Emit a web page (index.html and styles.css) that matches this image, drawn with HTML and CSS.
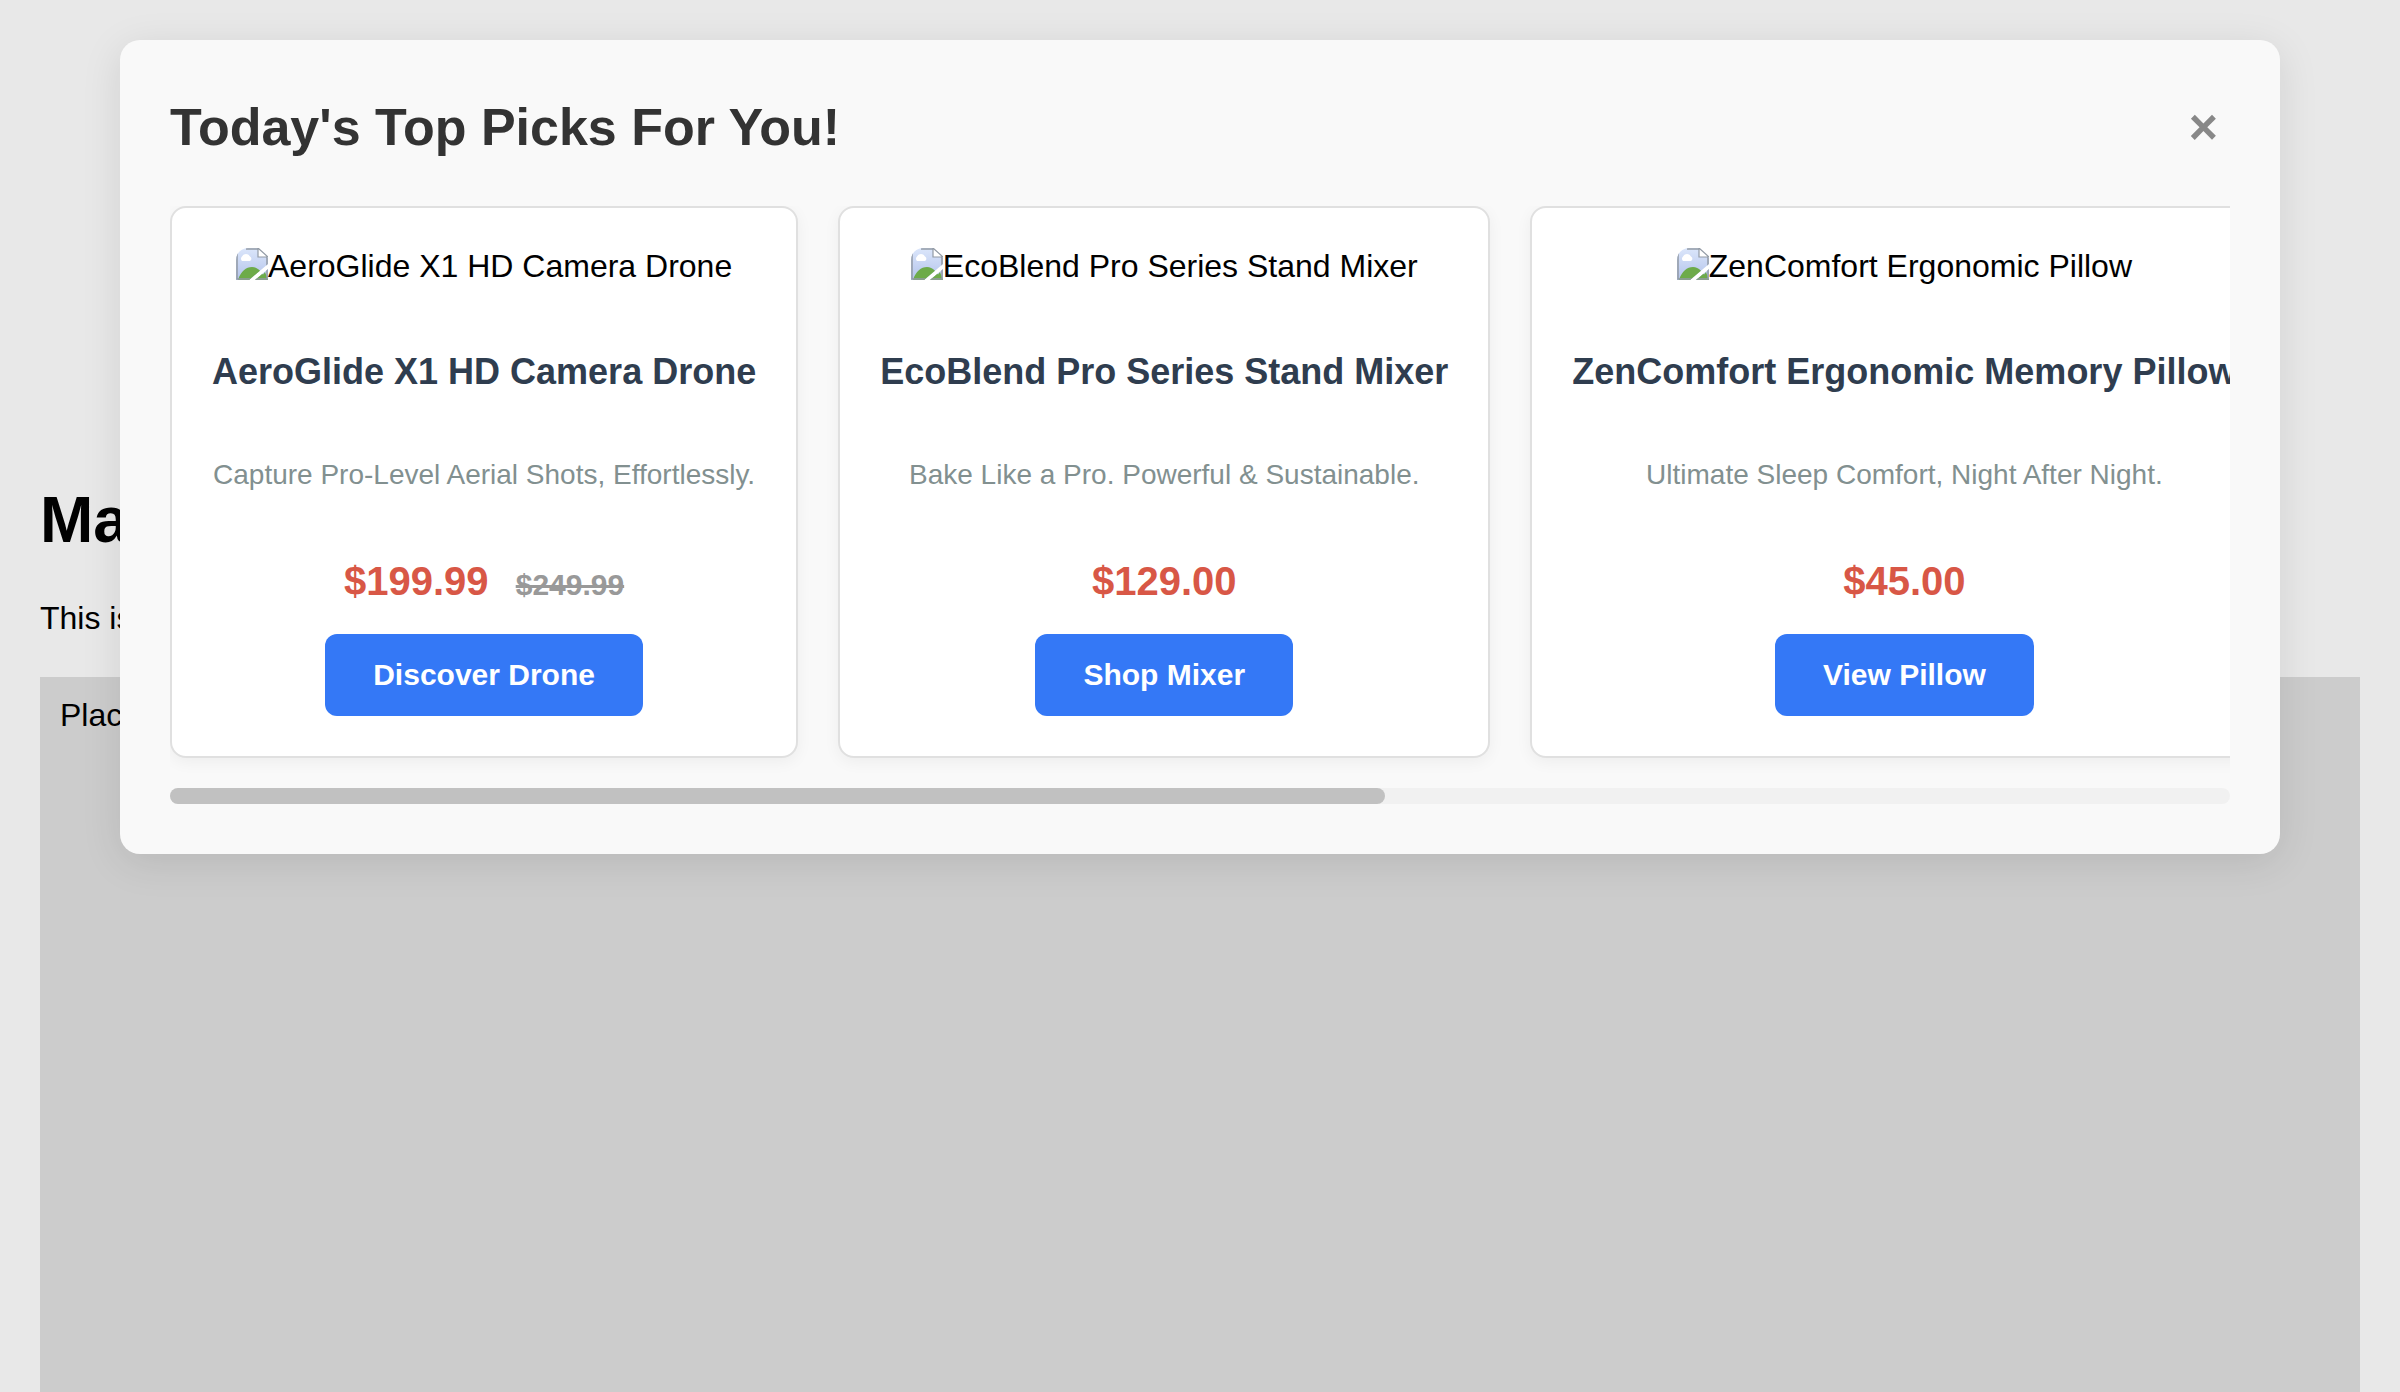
FILE: index.html
```html
<!DOCTYPE html>
<html lang="en">
<head>
<meta charset="utf-8">
<meta name="viewport" content="width=device-width, initial-scale=1">
<title>Today's Top Picks For You!</title>
<link rel="stylesheet" href="styles.css">
</head>
<body>
<svg class="sprite" width="0" height="0" aria-hidden="true">
  <defs>
    <linearGradient id="sky" x1="0" y1="0" x2="0" y2="1">
      <stop offset="0" stop-color="#dbe6fb"/>
      <stop offset="1" stop-color="#b3c3ea"/>
    </linearGradient>
    <clipPath id="sheet"><path d="M0 12A12 12 0 0 1 12 0H22L32 10V16L13 32H0Z M32 21V32H19Z"/></clipPath>
    <symbol id="picture" viewBox="0 0 32 32">
      <g clip-path="url(#sheet)">
        <path d="M0 0H32V32H0Z" fill="url(#sky)"/>
        <path d="M6 13A3 3 0 0 1 6 8.500A4.500 4.500 0 0 1 14 8.500A2.500 2.500 0 0 1 14 13Z" fill="#fff"/>
        <path d="M2 32C5 23 10 19 16 19C22 19 26 24 30 32Z M23 32L29 24L32 32Z" fill="#6dab49"/>
        <path d="M1 0V31H31V8M10 1H22" fill="none" stroke="#929aa5" stroke-width="1.500"/>
      </g>
      <path d="M22 0V9H32Z" fill="#fff" stroke="#929aa5" stroke-width="1.200"/>
    </symbol>
  </defs>
</svg>

<main class="page">
  <h1 class="page-title">Main</h1>
  <p class="page-text">This is</p>
  <div class="placeholder">Placeholder</div>
</main>

<section class="modal" role="dialog" aria-labelledby="picks-title">
  <header class="modal-header">
    <h2 class="modal-title" id="picks-title">Today's Top Picks For You!</h2>
    <button class="close" type="button" aria-label="Close">×</button>
  </header>
  <div class="cards">
    <article class="card">
      <div class="card-image"><svg class="icon" aria-hidden="true"><use href="#picture"/></svg>AeroGlide X1 HD Camera Drone</div>
      <h3 class="card-title">AeroGlide X1 HD Camera Drone</h3>
      <p class="card-text">Capture Pro-Level Aerial Shots, Effortlessly.</p>
      <p class="price">$199.99 <s class="old-price">$249.99</s></p>
      <button class="action" type="button">Discover Drone</button>
    </article>
    <article class="card">
      <div class="card-image"><svg class="icon" aria-hidden="true"><use href="#picture"/></svg>EcoBlend Pro Series Stand Mixer</div>
      <h3 class="card-title">EcoBlend Pro Series Stand Mixer</h3>
      <p class="card-text">Bake Like a Pro. Powerful &amp; Sustainable.</p>
      <p class="price">$129.00</p>
      <button class="action" type="button">Shop Mixer</button>
    </article>
    <article class="card">
      <div class="card-image"><svg class="icon" aria-hidden="true"><use href="#picture"/></svg>ZenComfort Ergonomic Pillow</div>
      <h3 class="card-title">ZenComfort Ergonomic Memory Pillow</h3>
      <p class="card-text">Ultimate Sleep Comfort, Night After Night.</p>
      <p class="price">$45.00</p>
      <button class="action" type="button">View Pillow</button>
    </article>
  </div>
  <div class="track"><div class="thumb"></div></div>
</section>
</body>
</html>
```
FILE: styles.css
```css
* { box-sizing: border-box; }

body {
  margin: 0;
  background: #e8e8e8;
  color: #000;
  font-family: Arial, "Liberation Sans", sans-serif;
  font-size: 32px;
  line-height: 36px;
}

h1, h2, h3, p { margin: 0; }
button { border: 0; font-family: inherit; font-weight: bold; cursor: pointer; }

.sprite { position: absolute; }

.page {
  display: flex;
  flex-direction: column;
  min-height: 100vh;
  padding: 484px 40px 0;
}
.page-title { margin-bottom: 43px; font-size: 64px; line-height: 73px; }
.page-text { margin-bottom: 41px; }
.placeholder { flex: 1; padding: 20px; background: #ccc; }

/* The dialog floats above the page */
.modal {
  position: absolute;
  top: 40px;
  left: 5%;
  width: 90%;
  padding: 50px;
  border-radius: 20px;
  background: #f9f9f9;
  box-shadow: 0 8px 40px rgba(0, 0, 0, 0.1);
}
.modal-header {
  display: flex;
  align-items: center;
  justify-content: space-between;
  margin-bottom: 42px;
}
.modal-title { color: #333; font-size: 52px; line-height: 60px; }
.close {
  padding: 6px 12px;
  background: none;
  color: #888;
  font-size: 50px;
  line-height: 62px;
}

.cards {
  display: flex;
  gap: 40px;
  padding-bottom: 30px;
  overflow: hidden;
}
.card {
  display: flex;
  flex: none;
  flex-direction: column;
  align-items: center;
  padding: 40px;
  border: 2px solid #e0e0e0;
  border-radius: 16px;
  background: #fff;
  box-shadow: 0 4px 16px rgba(0, 0, 0, 0.05);
  white-space: nowrap;
}
.card-image { display: flex; }
.icon { width: 32px; height: 32px; }
.card-title { margin-top: 67px; color: #2f3d4f; font-size: 36px; line-height: 42px; }
.card-text { margin-top: 66px; color: #829090; font-size: 28px; line-height: 32px; }
.price { margin-top: 67px; color: #d85746; font-size: 40px; font-weight: bold; line-height: 46px; }
.old-price { margin-left: 16px; color: #999; font-size: 30px; line-height: 30px; }
.action {
  margin-top: 30px;
  padding: 24px 48px;
  border-radius: 12px;
  background: #3478f6;
  color: #fff;
  font-size: 30px;
  line-height: 34px;
}

.track { height: 16px; border-radius: 8px; background: #f1f1f1; }
.thumb { width: 59%; height: 100%; border-radius: 8px; background: #c1c1c1; }
```
